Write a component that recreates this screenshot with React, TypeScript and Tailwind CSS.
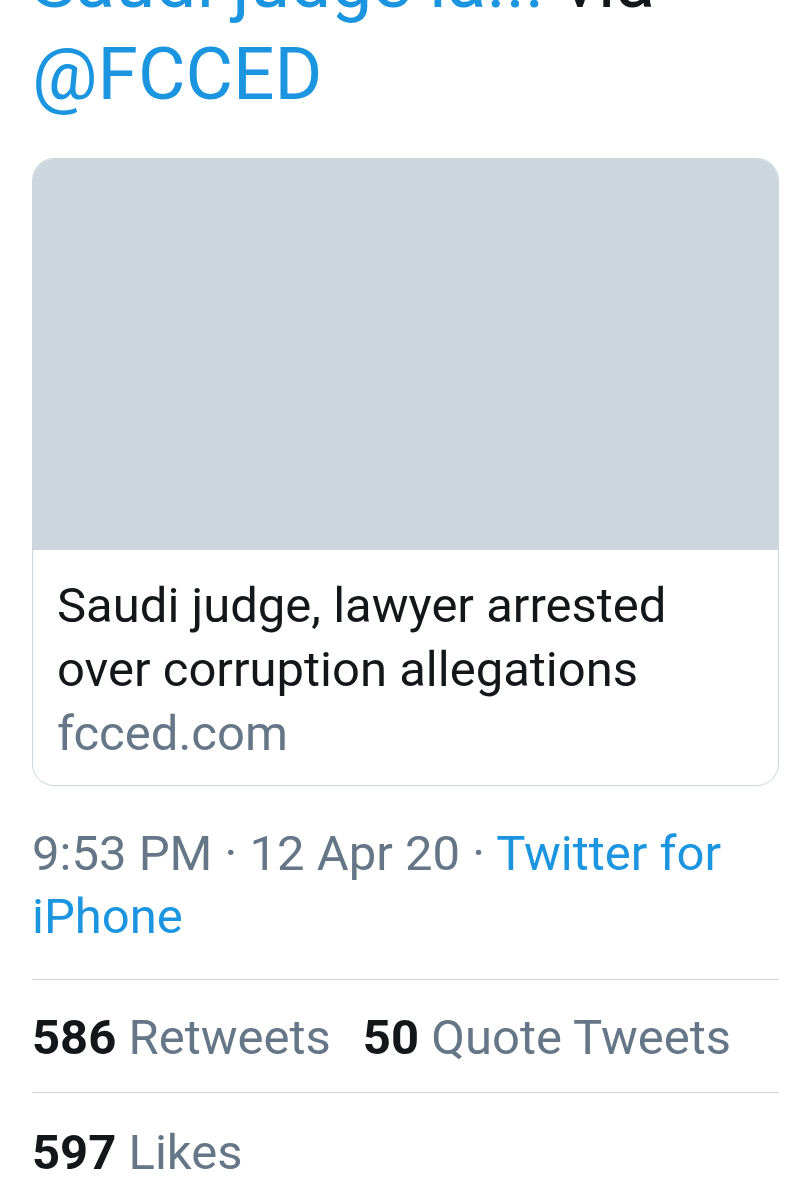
export default function App() {
  return (
    <div className="min-h-[1200px] w-[810px] overflow-hidden bg-white font-['Roboto',sans-serif] antialiased">
      <div className="pl-[32px] pr-[31px]">
        {/* tweet text, first line scrolled off the top */}
        <p className="-mt-[64px] text-[73px] leading-[92px] text-[#14171a]">
          <span className="text-[#1b95e0]">Saudi judge la...</span> via
          <br />
          <span className="text-[#1b95e0]">@FCCED</span>
        </p>

        {/* link card */}
        <div className="mt-[38px] overflow-hidden rounded-[22px] border border-[#ccd6dd]">
          <div className="h-[391px] bg-[#ccd6dd]" />
          <div className="px-[24px] pt-[24px] pb-[19px] text-[49px] leading-[64px]">
            <div className="text-[#14171a]">Saudi judge, lawyer arrested</div>
            <div className="text-[#14171a]">over corruption allegations</div>
            <div className="text-[#657786]">fcced.com</div>
          </div>
        </div>

        {/* timestamp */}
        <p className="mt-[36px] text-[49px] leading-[63px] text-[#657786]">
          9:53 PM · 12 Apr 20 · <span className="text-[#1b95e0]">Twitter for iPhone</span>
        </p>

        <div className="mt-[31px] border-t border-[#ccd6dd]" />
        <div className="flex gap-[32px] pt-[28px] pb-[24px] text-[49px] leading-[60px]">
          <div>
            <span className="font-bold text-[#14171a]">586</span>
            <span className="text-[#657786]"> Retweets</span>
          </div>
          <div>
            <span className="font-bold text-[#14171a]">50</span>
            <span className="text-[#657786]"> Quote Tweets</span>
          </div>
        </div>
        <div className="border-t border-[#ccd6dd]" />
        <div className="pt-[30px] text-[49px] leading-[60px]">
          <span className="font-bold text-[#14171a]">597</span>
          <span className="text-[#657786]"> Likes</span>
        </div>
      </div>
    </div>
  );
}
